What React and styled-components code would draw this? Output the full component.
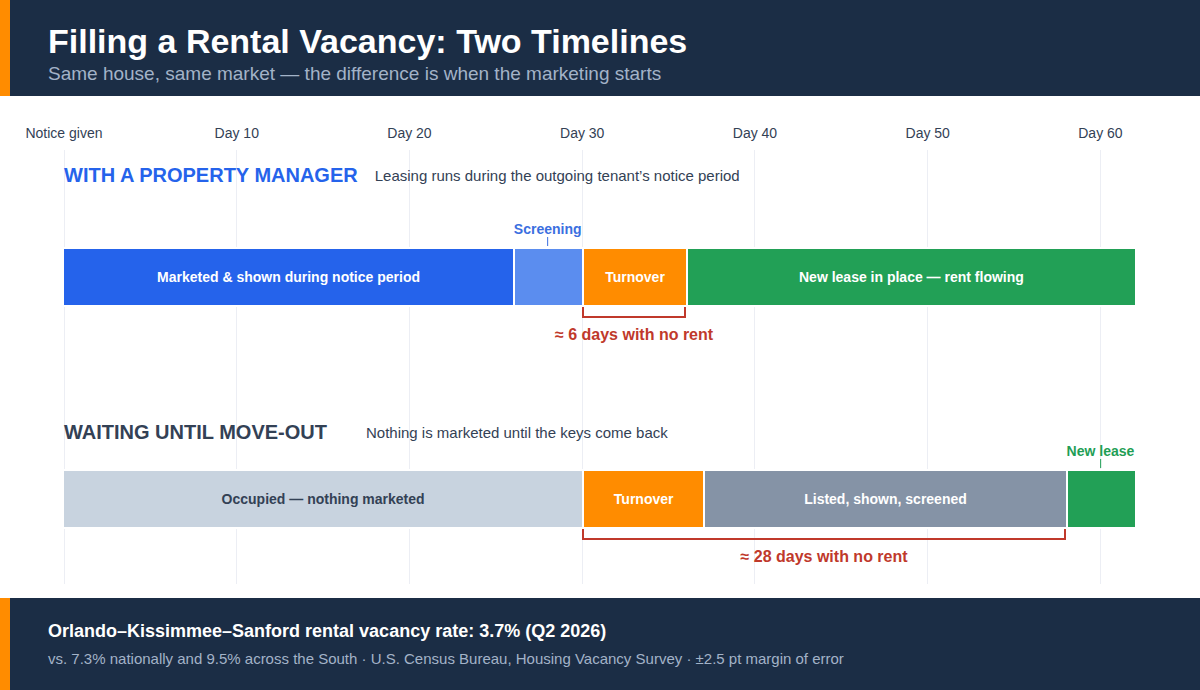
import React from "react"
import styled, { createGlobalStyle } from "styled-components"

const DAY = 1071 / 62
const x = d => d * DAY

const ticks = [
    { day: 0, label: "Notice given" },
    { day: 10, label: "Day 10" },
    { day: 20, label: "Day 20" },
    { day: 30, label: "Day 30" },
    { day: 40, label: "Day 40" },
    { day: 50, label: "Day 50" },
    { day: 60, label: "Day 60" },
]

const managed = [
    { days: 26, label: "Marketed & shown during notice period", tone: "blue" },
    { days: 4, label: "", tone: "sky" },
    { days: 6, label: "Turnover", tone: "orange" },
    { days: 26, label: "New lease in place — rent flowing", tone: "green" },
]

const waiting = [
    { days: 30, label: "Occupied — nothing marketed", tone: "mist" },
    { days: 7, label: "Turnover", tone: "orange" },
    { days: 21, label: "Listed, shown, screened", tone: "slate" },
    { days: 4, label: "", tone: "green" },
]

const tones = {
    blue: ["#2563eb", "#fff"],
    sky: ["#5b8def", "#fff"],
    orange: ["#ff8c00", "#fff"],
    green: ["#22a056", "#fff"],
    mist: ["#c8d3df", "#334155"],
    slate: ["#8593a6", "#fff"],
}

const Timeline = ({ title, titleColor, note, noteGap, headGap, mark, segments, gap }) => (
    <Section>
        <SectionHead $gap={headGap}>
            <SectionTitle $color={titleColor}>{title}</SectionTitle>
            <SectionNote $gap={noteGap}>{note}</SectionNote>
        </SectionHead>
        <MarkStrip>
            <Mark style={{ left: x(mark.day) }} $color={mark.color}>
                {mark.label}
                <MarkTick $color={mark.color} />
            </Mark>
        </MarkStrip>
        <Bar>
            {segments.map((s, i) => (
                <Segment key={i} style={{ width: x(s.days) }} $tone={s.tone}>
                    {s.label}
                </Segment>
            ))}
        </Bar>
        <GapWrap style={{ marginLeft: x(gap.from), width: x(gap.to - gap.from) }}>
            <Bracket />
            <GapLabel>{gap.label}</GapLabel>
        </GapWrap>
    </Section>
)

const App = () => {
    return (
        <Page>
            <GlobalStyle />
            <Header>
                <Title>Filling a Rental Vacancy: Two Timelines</Title>
                <Subtitle>Same house, same market — the difference is when the marketing starts</Subtitle>
            </Header>
            <Chart>
                <Axis>
                    {ticks.map(t => (
                        <AxisLabel key={t.day} style={{ left: x(t.day) }}>{t.label}</AxisLabel>
                    ))}
                </Axis>
                {ticks.map(t => (
                    <GridLine key={t.day} style={{ left: 64 + x(t.day) }} />
                ))}
                <Timeline
                    title="WITH A PROPERTY MANAGER"
                    titleColor="#2563eb"
                    note="Leasing runs during the outgoing tenant’s notice period"
                    noteGap={17}
                    headGap={35}
                    mark={{ day: 28, label: "Screening", color: "#3b6fe0" }}
                    segments={managed}
                    gap={{ from: 30, to: 36, label: "≈ 6 days with no rent" }}
                />
                <Spacer />
                <Timeline
                    title="WAITING UNTIL MOVE-OUT"
                    titleColor="#334155"
                    note="Nothing is marketed until the keys come back"
                    noteGap={39}
                    headGap={0}
                    mark={{ day: 60, label: "New lease", color: "#1f9e55" }}
                    segments={waiting}
                    gap={{ from: 30, to: 58, label: "≈ 28 days with no rent" }}
                />
            </Chart>
            <Footer>
                <FootTitle>Orlando–Kissimmee–Sanford rental vacancy rate: 3.7% (Q2 2026)</FootTitle>
                <FootNote>vs. 7.3% nationally and 9.5% across the South · U.S. Census Bureau, Housing Vacancy Survey · ±2.5 pt margin of error</FootNote>
            </Footer>
        </Page>
    )
}

export default App

const GlobalStyle = createGlobalStyle`
    * { box-sizing: border-box; }
    body {
        margin: 0;
        background: #fff;
        font-family: "Liberation Sans", Arial, sans-serif;
    }
`

const Page = styled.div`
    width: 1200px;
    height: 690px;
    display: flex;
    flex-direction: column;
    overflow: hidden;
`

const Header = styled.header`
    height: 96px;
    flex: none;
    background: #1b2d45;
    border-left: 10px solid #ff8c00;
    padding: 22px 0 0 38px;
    display: flex;
    flex-direction: column;
    gap: 3px;
`

const Title = styled.h1`
    margin: 0;
    font-size: 34px;
    line-height: 38px;
    font-weight: 700;
    color: #fff;
`

const Subtitle = styled.p`
    margin: 0;
    font-size: 19px;
    line-height: 22px;
    color: #a3b3c8;
`

const Chart = styled.main`
    position: relative;
    height: 502px;
    flex: none;
    padding-left: 64px;
`

const Axis = styled.div`
    position: relative;
    height: 54px;
`

const AxisLabel = styled.span`
    position: absolute;
    top: 29px;
    transform: translateX(-50%);
    font-size: 14px;
    line-height: 16px;
    color: #334155;
    white-space: nowrap;
`

const GridLine = styled.div`
    position: absolute;
    top: 54px;
    width: 1px;
    height: 434px;
    margin-left: -0.5px;
    background: #eceef4;
`

const Section = styled.section`
    position: relative;
    width: 1071px;
`

const SectionHead = styled.div`
    display: flex;
    align-items: center;
    height: 22px;
    margin-top: 14px;
    margin-bottom: ${p => p.$gap}px;
`

const SectionTitle = styled.h2`
    margin: 0;
    font-size: 20px;
    font-weight: 700;
    color: ${p => p.$color};
`

const SectionNote = styled.span`
    margin-left: ${p => p.$gap}px;
    font-size: 15px;
    color: #334155;
`

const MarkStrip = styled.div`
    position: relative;
    height: 28px;
`

const Mark = styled.div`
    position: absolute;
    top: 0;
    transform: translateX(-50%);
    display: flex;
    flex-direction: column;
    align-items: center;
    font-size: 14px;
    line-height: 16px;
    font-weight: 700;
    color: ${p => p.$color};
    white-space: nowrap;
`

const MarkTick = styled.i`
    display: block;
    width: 1px;
    height: 9px;
    background: ${p => p.$color};
`

const Bar = styled.div`
    position: relative;
    display: flex;
    height: 56px;
    box-shadow: 0 0 0 2px #fff;
`

const Segment = styled.div`
    flex: none;
    display: flex;
    align-items: center;
    justify-content: center;
    background: ${p => tones[p.$tone][0]};
    color: ${p => tones[p.$tone][1]};
    font-size: 14px;
    font-weight: 700;
    white-space: nowrap;

    & + & {
        border-left: 2px solid #fff;
    }
`

const GapWrap = styled.div`
    display: flex;
    flex-direction: column;
    align-items: center;
`

const Bracket = styled.div`
    align-self: stretch;
    height: 13px;
    border: 2px solid #c0392b;
    border-top: none;
`

const GapLabel = styled.div`
    margin-top: 8px;
    font-size: 16px;
    line-height: 18px;
    font-weight: 700;
    color: #c0392b;
    white-space: nowrap;
`

const Spacer = styled.div`
    height: 63px;
`

const Footer = styled.footer`
    height: 92px;
    flex: none;
    background: #1b2d45;
    border-left: 10px solid #ff8c00;
    padding: 23px 0 0 38px;
    display: flex;
    flex-direction: column;
    gap: 8px;
`

const FootTitle = styled.div`
    font-size: 18px;
    line-height: 21px;
    font-weight: 700;
    color: #fff;
`

const FootNote = styled.div`
    font-size: 15px;
    line-height: 18px;
    color: #a3b3c8;
`
